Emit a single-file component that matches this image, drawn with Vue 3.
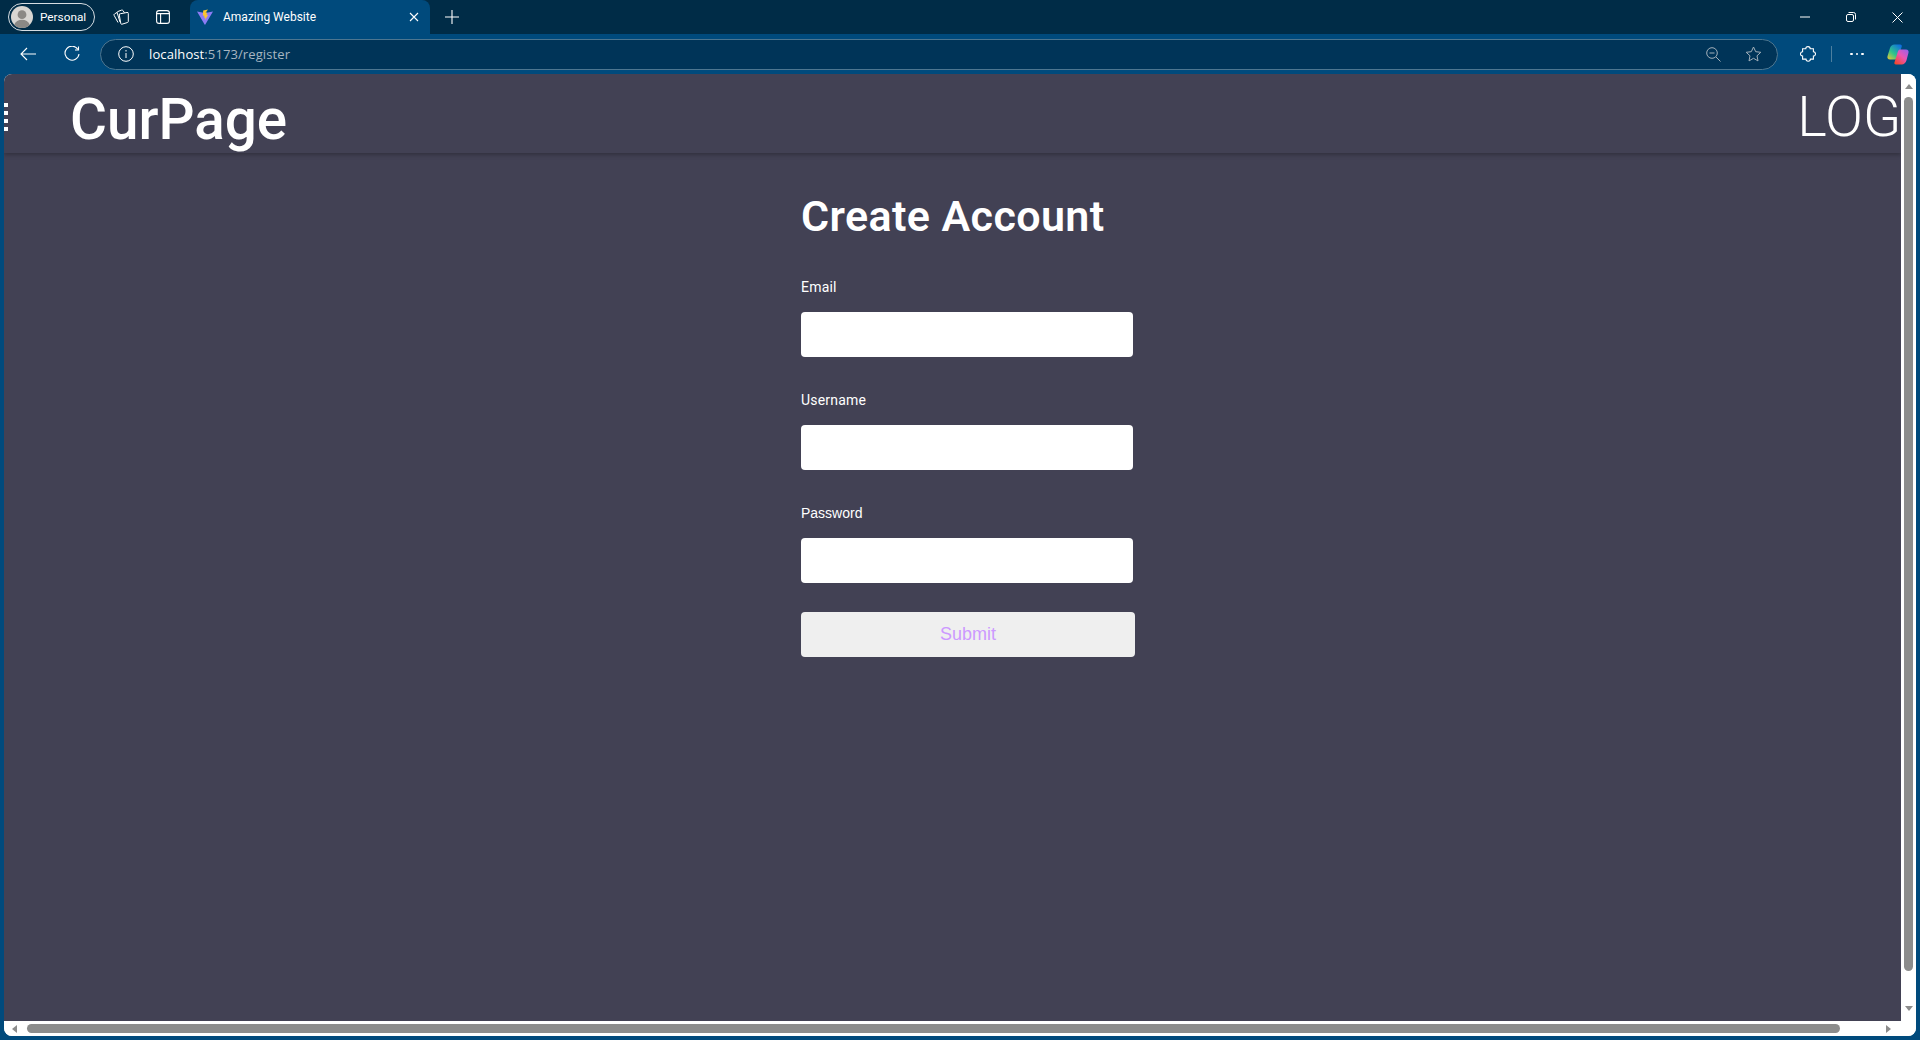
<script setup>
import { ref } from 'vue'

const email = ref('')
const username = ref('')
const password = ref('')
</script>

<template>
  <div class="window">
    <div class="tabstrip">
      <div class="profile">
        <svg class="avatar" width="22" height="22" viewBox="0 0 24 24">
          <circle cx="12" cy="12" r="12" fill="#d8d6d2" />
          <circle cx="12" cy="9.5" r="4.8" fill="#8b8985" />
          <path d="M3.5 20.5c1.500-4 4.500-5.600 8.500-5.600s7 1.600 8.500 5.600A12 12 0 0 1 12 24a12 12 0 0 1-8.500-3.500z" fill="#8b8985" />
        </svg>
        <span>Personal</span>
      </div>
      <svg class="strip-icon first" width="16" height="16" viewBox="0 0 16 16" fill="none" stroke="#fff" stroke-width="1">
        <path d="M7.500 4.700 14 3.500a1 1 0 0 1 1.300 1v8a1 1 0 0 1-.8 1L9 15.200a1 1 0 0 1-1.200-.6L6.300 6a1.100 1.100 0 0 1 1.200-1.300z" />
        <path d="M11.500 3.800 9.800 1.400a1 1 0 0 0-1.200-.3L4.700 2.600a1 1 0 0 0-.5 1.300L7 13" />
        <path d="M4.200 3.300 1.500 5a1 1 0 0 0-.4 1.300L5 13.500" />
      </svg>
      <svg class="strip-icon second" width="14" height="14" viewBox="0 0 14 14" fill="none" stroke="#fff" stroke-width="1.100">
        <rect x=".6" y=".6" width="12.800" height="12.800" rx="2.500" />
        <path d="M.6 3.600h12.800M4.600 3.600v9.800" />
      </svg>
      <div class="tab">
        <svg width="16" height="16" viewBox="0 0 16 16">
          <path d="M0 2.500 8 4l8-1.500L8.300 15.500a.4.4 0 0 1-.7 0z" fill="#8c7cf5" />
          <path d="M11 .5 6.200 1.500 5.900 6.700l1.500-.2-.3 2.300 1.300-.3-.3 2.600 3-5.300-1.600.3.600-2.600-1.500.2z" fill="#fdc62c" />
        </svg>
        <span class="tab-title">Amazing Website</span>
        <svg class="tab-close" width="10" height="10" viewBox="0 0 10 10" stroke="#fff" stroke-width="1.100">
          <path d="M1 1l8 8M9 1l-8 8" />
        </svg>
      </div>
      <svg class="new-tab" width="14" height="14" viewBox="0 0 14 14" stroke="#fff" stroke-width="1.100">
        <path d="M7 0v14M0 7h14" />
      </svg>
      <div class="caption">
        <svg width="10" height="10" viewBox="0 0 10 10" stroke="#fff"><path d="M0 5h10" /></svg>
        <svg width="10" height="10" viewBox="0 0 10 10" fill="none" stroke="#fff">
          <rect x=".5" y="2.500" width="7" height="7" rx="1.500" />
          <path d="M2.500 .5h5a2 2 0 0 1 2 2v5" />
        </svg>
        <svg width="11" height="11" viewBox="0 0 11 11" stroke="#fff"><path d="M.5.5l10 10M10.500.5l-10 10" /></svg>
      </div>
    </div>

    <div class="toolbar">
      <svg class="back" width="16" height="14" viewBox="0 0 16 14" fill="none" stroke="#fff" stroke-width="1.100">
        <path d="M16 7H1M7 1 1 7l6 6" />
      </svg>
      <svg class="reload" width="16" height="16" viewBox="0 0 16 16" fill="none" stroke="#fff" stroke-width="1.100">
        <path d="M14 3.500A7 7 0 1 0 15 8" />
        <path d="M14.500 .5v3.500H11" />
      </svg>
      <div class="address">
        <svg width="16" height="16" viewBox="0 0 16 16" fill="none" stroke="#fff">
          <circle cx="8" cy="8" r="7.300" />
          <path d="M8 7v5M8 4v1.500" />
        </svg>
        <span class="url"><b>localhost</b>:5173/register</span>
        <svg class="zoom-out" width="15" height="15" viewBox="0 0 15 15" fill="none" stroke="#a3b0ba">
          <circle cx="6" cy="6" r="5.300" />
          <path d="M3.500 6h5M10 10l4.500 4.500" />
        </svg>
        <svg class="star" width="17" height="16" viewBox="0 0 17 16" fill="none" stroke="#a3b0ba">
          <path d="M8.500 1l2.200 4.700 5.100.6-3.800 3.500 1 5.100-4.500-2.600L4 14.900l1-5.100L1.200 6.300l5.100-.6z" />
        </svg>
      </div>
      <svg class="puzzle" width="16" height="16" viewBox="0 0 16 16" fill="none" stroke="#fff" stroke-width="1.100">
        <path d="M5.800 2.700C5.800 1.300 6.900.6 8 .6s2.200.7 2.200 2.100h3.200v3c1.300 0 2.100 1 2.100 2.200s-.8 2.200-2.100 2.200v3h-3c0 1.300-1 2.200-2.200 2.200s-2.200-.9-2.200-2.200H2.600v-3C1.300 10.100.5 9.100.5 7.900s.8-2.200 2.100-2.200v-3z" />
      </svg>
      <span class="divider"></span>
      <div class="more"><i></i><i></i><i></i></div>
      <svg class="copilot" width="22" height="21" viewBox="0 0 22 21">
        <defs>
          <linearGradient id="cpa" x1="0" y1="1" x2=".8" y2="0">
            <stop offset="0" stop-color="#f5c92e" />
            <stop offset=".45" stop-color="#2fc48a" />
            <stop offset="1" stop-color="#0f6fe0" />
          </linearGradient>
          <linearGradient id="cpb" x1=".2" y1="1" x2="1" y2="0">
            <stop offset="0" stop-color="#f4472e" />
            <stop offset=".5" stop-color="#ea55b4" />
            <stop offset="1" stop-color="#8f63f0" />
          </linearGradient>
        </defs>
        <path d="M7.500 .5H13c1.500 0 2.200 1 1.700 2.300L11 13.500c-.5 1.300-1.300 2-2.800 2H3c-2 0-3-1.500-2.500-3.300L3 4C3.800 1.800 5.300.5 7.500.5z" fill="url(#cpa)" />
        <path d="M13.500 5.500H19c2 0 3 1.500 2.500 3.300l-2 7.500C18.800 19 17 20.500 14.800 20.500H9c-1.500 0-2-1-1.500-2.200l3.500-11c.4-1.200 1.300-1.800 2.500-1.800z" fill="url(#cpb)" />
      </svg>
    </div>

    <div class="frame">
      <div class="viewport">
        <div class="page">
          <header class="nav">
            <div class="dots"><i></i><i></i><i></i><i></i></div>
            <span class="brand">CurPage</span>
            <span class="login">LOGIN</span>
          </header>
          <form class="form" @submit.prevent>
            <h1>Create Account</h1>
            <label for="email">Email</label>
            <input id="email" v-model="email" type="email">
            <label for="username">Username</label>
            <input id="username" v-model="username" type="text">
            <label for="password" class="plain">Password</label>
            <input id="password" v-model="password" type="password">
            <button type="submit" disabled>Submit</button>
          </form>
        </div>
        <div class="vbar">
          <span class="arrow up"></span>
          <span class="vthumb"></span>
          <span class="arrow down"></span>
        </div>
      </div>
      <div class="hbar">
        <span class="arrow left"></span>
        <span class="hthumb"></span>
        <span class="arrow right"></span>
      </div>
    </div>
  </div>
</template>

<style>
html, body {
  margin: 0;
  overflow: hidden;
}
</style>

<style scoped>
.window {
  width: 1920px;
  height: 1040px;
  display: flex;
  flex-direction: column;
  background: #004a7c;
  font-family: Roboto, "Liberation Sans", sans-serif;
  overflow: hidden;
}

/* browser chrome */
.tabstrip {
  height: 34px;
  flex: none;
  display: flex;
  align-items: center;
  background: #002c47;
  color: #fff;
}

.profile {
  width: 87px;
  height: 28px;
  margin-left: 8px;
  padding-left: 2px;
  box-sizing: border-box;
  display: flex;
  align-items: center;
  gap: 7px;
  border: 1px solid #d6dde2;
  border-radius: 14px;
  font-size: 11.800px;
}

.strip-icon.first {
  margin-left: 18px;
}

.strip-icon.second {
  margin-left: 27px;
}

.tab {
  width: 240px;
  height: 34px;
  margin-left: 20px;
  padding: 0 11px 0 7px;
  box-sizing: border-box;
  display: flex;
  align-items: center;
  background: #004a7c;
  border-radius: 8px 8px 0 0;
}

.tab-title {
  margin-left: 10px;
  font-size: 12px;
  flex: 1;
}

.new-tab {
  margin-left: 15px;
}

.caption {
  margin-left: auto;
  width: 103px;
  margin-right: 17px;
  display: flex;
  align-items: center;
  justify-content: space-between;
}

.toolbar {
  height: 40px;
  flex: none;
  display: flex;
  align-items: center;
  background: #004a7c;
}

.back {
  margin-left: 20px;
}

.reload {
  margin-left: 28px;
}

.address {
  width: 1678px;
  height: 31px;
  margin-left: 20px;
  padding: 0 15px 0 17px;
  box-sizing: border-box;
  display: flex;
  align-items: center;
  background: #003458;
  border: 1px solid #4d7690;
  border-radius: 16px;
}

.url {
  margin-left: 15px;
  font-family: "Open Sans", "Liberation Sans", sans-serif;
  font-size: 13px;
  letter-spacing: .1px;
  color: #a7b6c1;
  flex: 1;
}

.url b {
  color: #fff;
  font-weight: 400;
}

.star {
  margin-left: 24px;
}

.puzzle {
  margin-left: 22px;
}

.divider {
  width: 1px;
  height: 16px;
  margin-left: 15px;
  background: #4d7f9f;
}

.more {
  margin-left: 18px;
  display: flex;
  gap: 3px;
}

.more i {
  width: 2.500px;
  height: 2.500px;
  background: #fff;
  border-radius: 50%;
}

.copilot {
  margin-left: 23px;
}

/* page frame with the scrollbars */
.frame {
  flex: 1;
  min-height: 0;
  margin: 0 4px 4px;
  display: flex;
  flex-direction: column;
  background: #fff;
  border-radius: 8px;
  overflow: hidden;
}

.viewport {
  flex: 1;
  min-height: 0;
  display: flex;
}

.page {
  flex: 1;
  min-width: 0;
  background: #424154;
  color: #fff;
  overflow: hidden;
}

.nav {
  height: 79px;
  display: flex;
  align-items: center;
  box-shadow: 0 2px 4px rgba(0, 0, 0, .25);
  overflow: hidden;
}

.dots {
  width: 4px;
  flex: none;
  display: flex;
  flex-direction: column;
  gap: 4px;
  margin-top: 7px;
}

.dots i {
  width: 4px;
  height: 4px;
  background: #fff;
}

.brand {
  margin-left: 62px;
  font-size: 56.600px;
  font-weight: 500;
  line-height: 1;
  margin-top: 14px;
  flex: none;
}

.login {
  margin-left: auto;
  margin-right: -55px;
  font-size: 56px;
  font-weight: 300;
  line-height: 1;
  margin-top: 6px;
  flex: none;
}

.form {
  width: 334px;
  margin: 0 0 0 797px;
  display: flex;
  flex-direction: column;
  align-items: flex-start;
}

h1 {
  margin: 35px 0 0;
  font-size: 43px;
  line-height: 56px;
  font-weight: 600;
  letter-spacing: .4px;
  white-space: nowrap;
}

label {
  margin-top: 35px;
  font-size: 14px;
  line-height: 17px;
  letter-spacing: .2px;
}

label.plain {
  font-family: "Liberation Sans", sans-serif;
  letter-spacing: 0;
}

input + label {
  margin-top: 35px;
}

input {
  width: 332px;
  height: 45px;
  margin-top: 16px;
  padding: 0 10px;
  box-sizing: border-box;
  background: #fff;
  border: 0;
  border-radius: 4px;
}

button {
  width: 334px;
  height: 45px;
  margin-top: 29px;
  background: #efefef;
  color: #cc99ff;
  border: 0;
  border-radius: 4px;
  font-family: "Liberation Sans", sans-serif;
  font-size: 18px;
}

/* scrollbars */
.vbar {
  width: 15px;
  flex: none;
  padding: 10px 2px 5px;
  box-sizing: border-box;
  display: flex;
  flex-direction: column;
  align-items: center;
  background: #fff;
}

.vthumb {
  width: 9px;
  height: 874px;
  margin-top: 8px;
  background: #8c8c8c;
  border-radius: 5px;
}

.hbar {
  height: 15px;
  flex: none;
  padding: 0 25px 0 8px;
  display: flex;
  align-items: center;
  background: #fff;
}

.hthumb {
  width: 1813px;
  height: 9px;
  margin-left: 10px;
  background: #8c8c8c;
  border-radius: 5px;
}

.arrow {
  width: 0;
  height: 0;
  flex: none;
  border-style: solid;
  border-color: transparent;
}

.arrow.up {
  border-width: 0 4.500px 5px;
  border-bottom-color: #8c8c8c;
}

.arrow.down {
  margin-top: auto;
  margin-bottom: 5px;
  border-width: 5px 4.500px 0;
  border-top-color: #8c8c8c;
}

.arrow.left {
  border-width: 4.500px 5px 4.500px 0;
  border-right-color: #8c8c8c;
}

.arrow.right {
  margin-left: auto;
  border-width: 4.500px 0 4.500px 5px;
  border-left-color: #8c8c8c;
}
</style>
